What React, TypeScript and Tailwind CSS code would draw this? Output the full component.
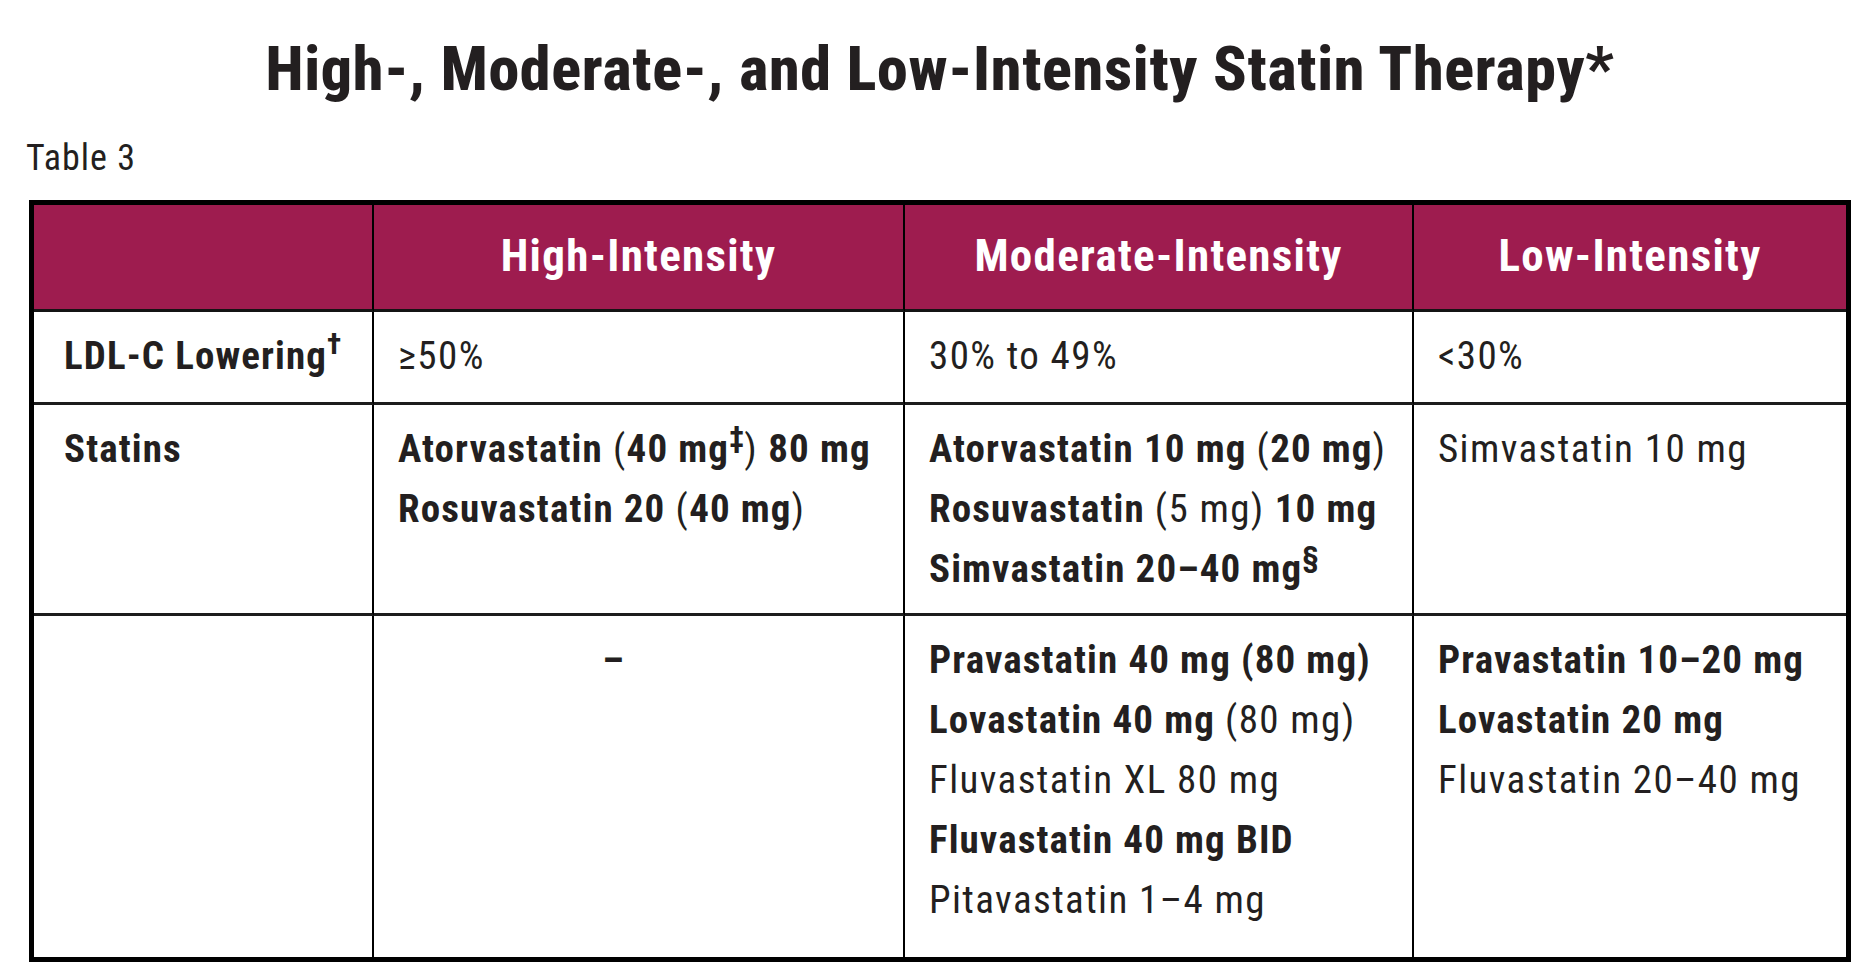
import React from "react";

type P = { children: React.ReactNode };

const R = ({ children }: P) => (
  <span className="font-normal tracking-[1.4px]">{children}</span>
);

const Sup = ({ children }: P) => (
  <span className="relative -top-[15px] text-[30px] leading-none font-bold tracking-normal">
    {children}
  </span>
);

const HEAD =
  "bg-[#9e1c4f] text-white text-center text-[45px] leading-[45px] font-bold font-stretch-condensed tracking-[1.3px] pt-[28px] pb-[31px] border-b-[3px] border-b-[#141414]";
const VR = "border-r-2 border-r-black";
const HR = "border-b-[3px] border-b-[#1c1c1c]";

export default function App() {
  return (
    <div className="w-[1870px] min-h-[968px] bg-white text-[#231f20] font-['Roboto',sans-serif] overflow-hidden">
      <h1 className="pt-[38px] pl-[10px] text-center text-[62px] leading-[62px] font-extrabold font-stretch-condensed tracking-[0.7px]">
        High-, Moderate-, and Low-Intensity Statin Therapy*
      </h1>
      <div className="mt-[40px] ml-[26px] text-[36px] leading-[36px] font-stretch-condensed tracking-[1px]">
        Table 3
      </div>
      <div className="mt-[24px] ml-[29px] w-[1822px] border-[5px] border-black grid grid-cols-[340px_531px_509px_432px] text-[39px] leading-[60px] font-bold font-stretch-semi-condensed tracking-[1.1px]">
        {/* Header */}
        <div className={`${HEAD} ${VR}`}></div>
        <div className={`${HEAD} ${VR}`}>High-Intensity</div>
        <div className={`${HEAD} ${VR}`}>Moderate-Intensity</div>
        <div className={HEAD}>Low-Intensity</div>

        {/* LDL-C row */}
        <div className={`${VR} ${HR} pl-[30px] pt-[14px] pb-[16px]`}>
          LDL-C Lowering<Sup>†</Sup>
        </div>
        <div className={`${VR} ${HR} pl-[24px] pt-[14px] pb-[16px]`}>
          <R>≥50%</R>
        </div>
        <div className={`${VR} ${HR} pl-[24px] pt-[14px] pb-[16px]`}>
          <R>30% to 49%</R>
        </div>
        <div className={`${HR} pl-[24px] pt-[14px] pb-[16px]`}>
          <R>&lt;30%</R>
        </div>

        {/* Statins row */}
        <div className={`${VR} ${HR} pl-[30px] pt-[14px] pb-[14px]`}>Statins</div>
        <div className={`${VR} ${HR} pl-[24px] pt-[14px] pb-[14px]`}>
          <div>
            Atorvastatin <R>(</R>40 mg<Sup>‡</Sup>
            <R>)</R> 80 mg
          </div>
          <div>
            Rosuvastatin 20 <R>(</R>40 mg<R>)</R>
          </div>
        </div>
        <div className={`${VR} ${HR} pl-[24px] pt-[14px] pb-[14px]`}>
          <div>
            Atorvastatin 10 mg <R>(</R>20 mg<R>)</R>
          </div>
          <div>
            Rosuvastatin <R>(5 mg)</R> 10 mg
          </div>
          <div>
            Simvastatin 20–40 mg<Sup>§</Sup>
          </div>
        </div>
        <div className={`${HR} pl-[24px] pt-[14px] pb-[14px]`}>
          <div>
            <R>Simvastatin 10 mg</R>
          </div>
        </div>

        {/* Other statins row */}
        <div className={`${VR} pl-[30px] pt-[14px] pb-[27px]`}></div>
        <div className={`${VR} pl-[24px] pr-[74px] pt-[14px] pb-[27px] text-center`}>–</div>
        <div className={`${VR} pl-[24px] pt-[14px] pb-[27px]`}>
          <div>Pravastatin 40 mg (80 mg)</div>
          <div>
            Lovastatin 40 mg <R>(80 mg)</R>
          </div>
          <div>
            <R>Fluvastatin XL 80 mg</R>
          </div>
          <div>Fluvastatin 40 mg BID</div>
          <div>
            <R>Pitavastatin 1–4 mg</R>
          </div>
        </div>
        <div className="pl-[24px] pt-[14px] pb-[27px]">
          <div>Pravastatin 10–20 mg</div>
          <div>Lovastatin 20 mg</div>
          <div>
            <R>Fluvastatin 20–40 mg</R>
          </div>
        </div>
      </div>
    </div>
  );
}
